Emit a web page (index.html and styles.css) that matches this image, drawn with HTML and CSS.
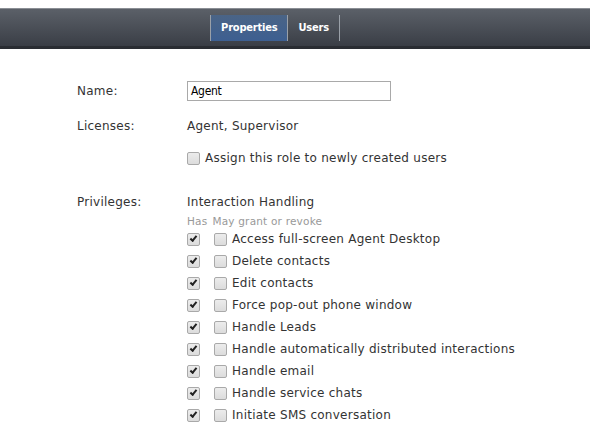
FILE: index.html
```html
<!DOCTYPE html>
<html>
<head>
<meta charset="utf-8">
<link rel="stylesheet" href="styles.css">
</head>
<body>
<div class="topbar">
  <div class="tabs">
    <div class="tab active">Properties</div>
    <div class="tab">Users</div>
  </div>
</div>
<div class="form">
  <div class="row name-row">
    <div class="label">Name:</div>
    <div class="value"><div class="input">Agent</div></div>
  </div>
  <div class="row lic-row">
    <div class="label">Licenses:</div>
    <div class="value">Agent, Supervisor</div>
  </div>
  <div class="row assign-row">
    <div class="label"></div>
    <div class="value check-line"><span class="cb"></span>Assign this role to newly created users</div>
  </div>
  <div class="row priv-row">
    <div class="label">Privileges:</div>
    <div class="value">
      <div class="group">Interaction Handling</div>
      <div class="hdr"><span class="has">Has</span><span>May grant or revoke</span></div>
      <div class="priv"><span class="cb on"></span><span class="cb"></span><span class="pt">Access full-screen Agent Desktop</span></div>
      <div class="priv"><span class="cb on"></span><span class="cb"></span><span class="pt">Delete contacts</span></div>
      <div class="priv"><span class="cb on"></span><span class="cb"></span><span class="pt">Edit contacts</span></div>
      <div class="priv"><span class="cb on"></span><span class="cb"></span><span class="pt">Force pop-out phone window</span></div>
      <div class="priv"><span class="cb on"></span><span class="cb"></span><span class="pt">Handle Leads</span></div>
      <div class="priv"><span class="cb on"></span><span class="cb"></span><span class="pt">Handle automatically distributed interactions</span></div>
      <div class="priv"><span class="cb on"></span><span class="cb"></span><span class="pt">Handle email</span></div>
      <div class="priv"><span class="cb on"></span><span class="cb"></span><span class="pt">Handle service chats</span></div>
      <div class="priv"><span class="cb on"></span><span class="cb"></span><span class="pt">Initiate SMS conversation</span></div>
    </div>
  </div>
</div>
</body>
</html>
```
FILE: styles.css
```css
html, body { margin: 0; padding: 0; background: #fff; }
body { font-family: "DejaVu Sans", Verdana, sans-serif; font-size: 12px; letter-spacing: 0.25px; color: #333; overflow: hidden; height: 427px; }
.topbar {
  margin-top: 8px;
  height: 37px;
  border-top: 1px solid #8a8e94;
  border-bottom: 3px solid #2a2d33;
  background: linear-gradient(#5b6068, #3a3e46);
  display: flex;
  justify-content: center;
}
.tabs { display: flex; margin-top: 6px; height: 26px; border-left: 1px solid #9aa0a8; transform: translateX(-20px); }
.tab {
  font-family: Tahoma, "DejaVu Sans Condensed", "DejaVu Sans", sans-serif;
  font-weight: bold; font-size: 11px; color: #fff;
  padding: 0 10px; line-height: 26px;
  border-right: 1px solid #9aa0a8;
  letter-spacing: -0.2px;
}
.tab.active { background: linear-gradient(#4a6486, #3d5f91); }
.form { padding-left: 77px; padding-top: 32px; }
.row { display: flex; }
.label { width: 110px; flex: none; }
.name-row { align-items: center; }
.input {
  width: 199px; height: 18px; border: 1px solid #a9a9a9; box-sizing: content-box;
  font-family: Tahoma, "DejaVu Sans Condensed", sans-serif; font-size: 12px; color: #000;
  line-height: 18px; padding-left: 3px; letter-spacing: -0.3px;
}
.lic-row { margin-top: 18px; }
.assign-row { margin-top: 18px; }
.check-line { display: flex; align-items: center; }
.check-line .cb { margin-right: 5px; }
.priv-row { margin-top: 30px; }
.hdr { font-size: 10.5px; color: #999; margin-top: 5px; letter-spacing: 0.2px; line-height: 14px; }
.hdr .has { margin-right: 5px; }
.priv { display: flex; align-items: center; height: 22px; }
.cb {
  width: 11px; height: 11px; border: 1px solid #a9a9a9; border-radius: 2px;
  background: linear-gradient(#ececec, #dcdcdc); display: inline-block; flex: none; position: relative;
}
.priv .cb { margin-right: 14px; }
.priv .cb + .cb { margin-right: 5px; }
.cb.on::after {
  content: ""; position: absolute; left: 2px; top: 2px; width: 5px; height: 2px;
  border-left: 2px solid #222; border-bottom: 2px solid #222; transform: rotate(-50deg);
}
```
